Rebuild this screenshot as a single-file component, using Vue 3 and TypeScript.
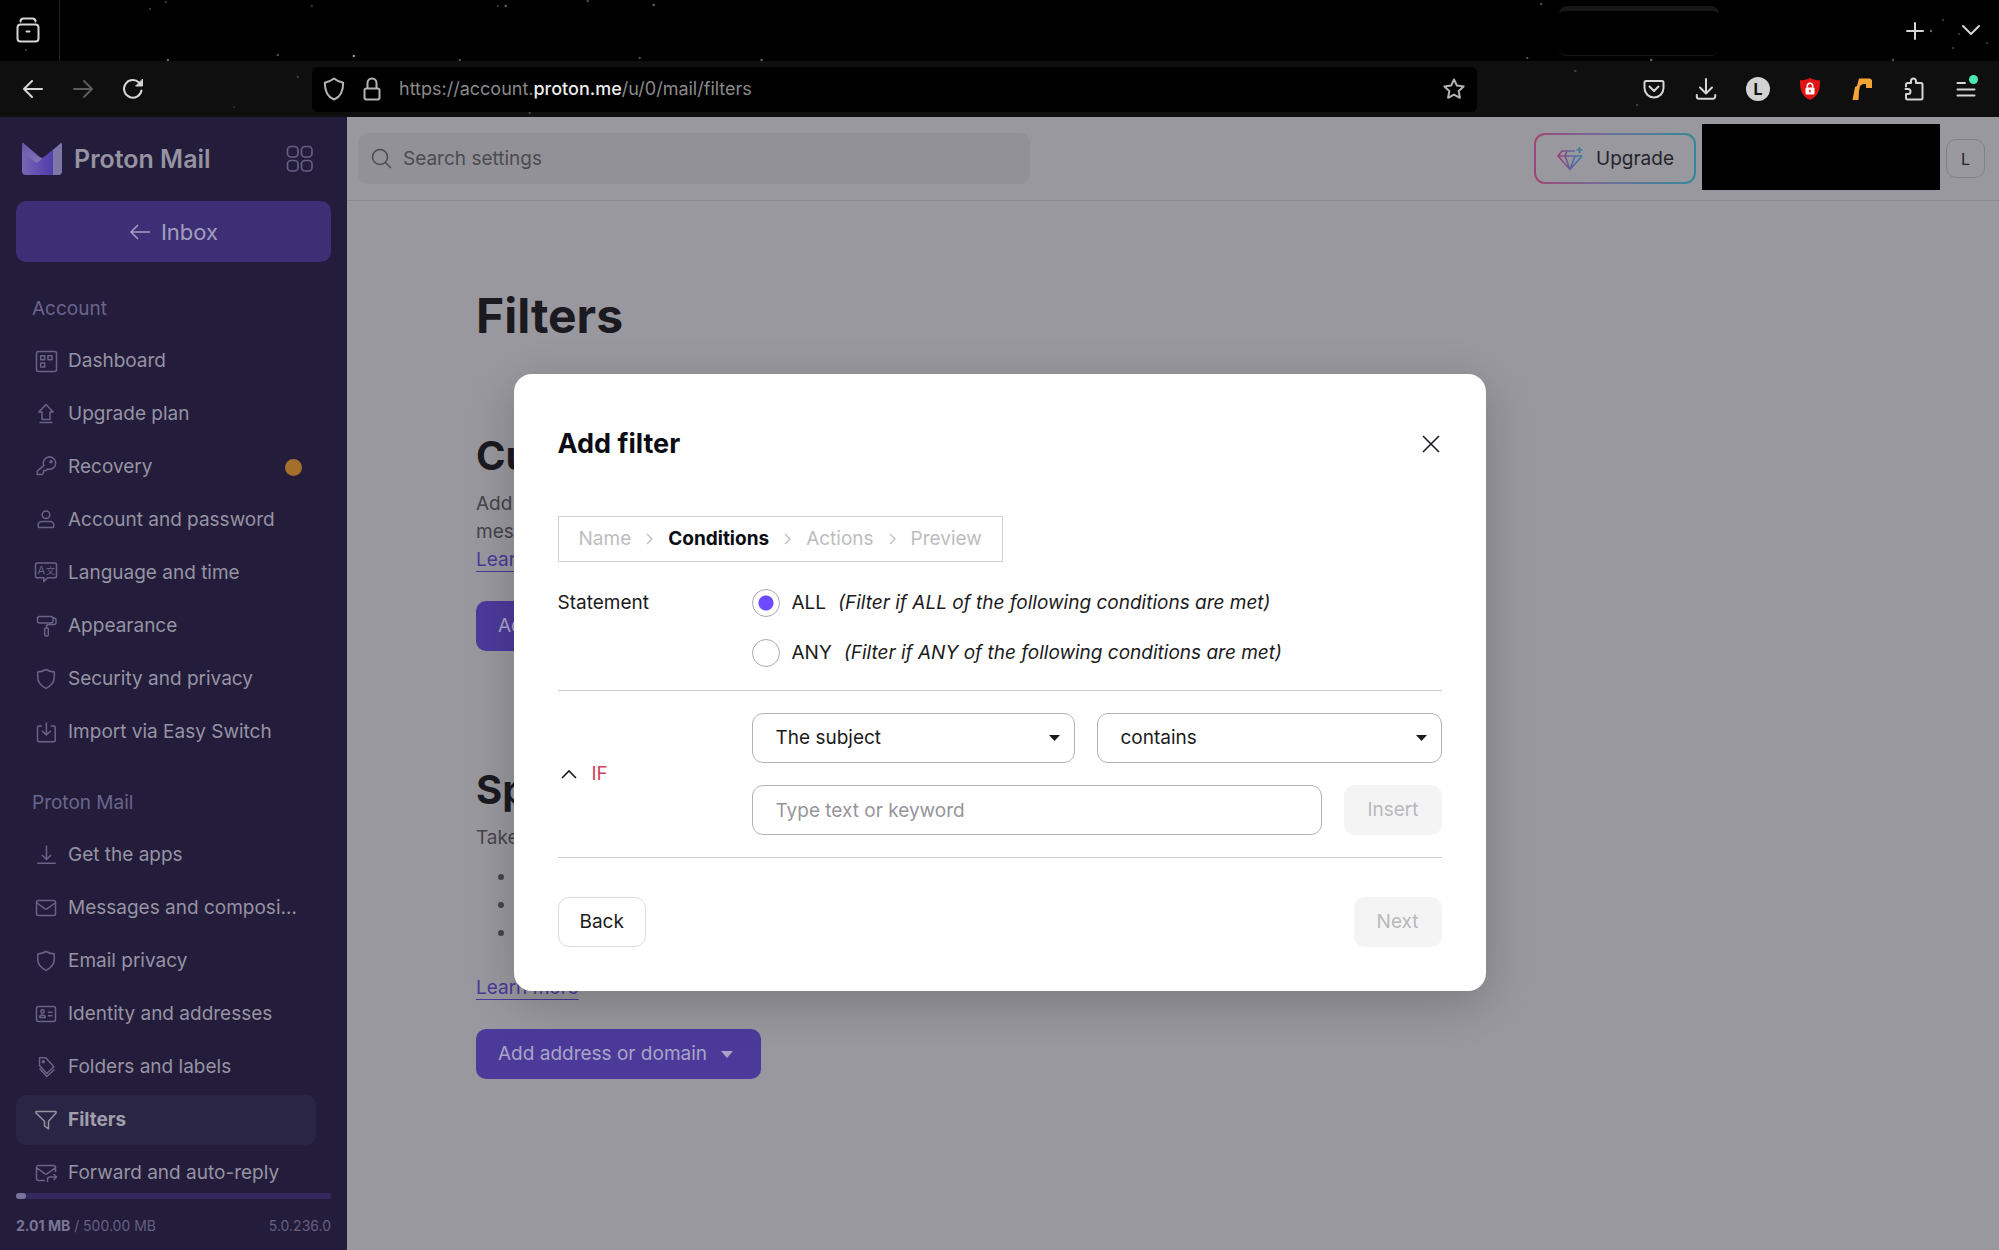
<script setup lang="ts">
import { ref } from 'vue'

interface NavItem {
  label: string
  icon: string
  active?: boolean
  alert?: boolean
}

const shield =
  '<path d="M12 2.5C14.3 4 17 4.7 20.3 5v5c0 5-3 8.7-8.3 11.3C6.7 18.7 3.7 15 3.7 10V5C7 4.7 9.7 4 12 2.5z"/>'

const icons: Record<string, string> = {
  dashboard:
    '<rect x="2.5" y="2.5" width="20" height="20" rx="2"/><rect x="6.7" y="6.7" width="4" height="4"/><rect x="14" y="6.7" width="4" height="4"/><rect x="6.7" y="14" width="4" height="4"/>',
  upgrade: '<path d="M12 2.5L4.8 10H8v7.5h8V10h3.2zM5.5 20.5h13"/>',
  key: '<path d="M9.8 10.6A6.2 6.2 0 1 1 13.6 14l-1.6 1.5H9.5V18L8 19.5H3.3V16z"/><circle cx="17" cy="6.8" r="1"/>',
  user: '<circle cx="12" cy="6.8" r="3.8"/><path d="M7.5 13.5h9a3.3 3.3 0 0 1 3.3 3.3v1.7a1 1 0 0 1-1 1H5.2a1 1 0 0 1-1-1v-1.7a3.3 3.3 0 0 1 3.3-3.3z"/>',
  language:
    '<path d="M3 2h18a1.5 1.5 0 0 1 1.5 1.5v11.7a1.5 1.5 0 0 1-1.5 1.5h-7.5l-3.7 3.7v-3.7H3a1.5 1.5 0 0 1-1.5-1.5V3.5A1.5 1.5 0 0 1 3 2z"/><text x="3.5" y="13" font-size="11">A</text><text x="12" y="13" font-size="9">文</text>',
  roller:
    '<rect x="3.5" y="2.5" width="15.5" height="6.5" rx="2"/><path d="M19 4h1a2 2 0 0 1 2 2v2.5a2 2 0 0 1-2 2h-5.5a2 2 0 0 0-2 2V14"/><rect x="10.7" y="14" width="3.6" height="8" rx="1"/>',
  shield,
  import:
    '<path d="M8 6H5a1.5 1.5 0 0 0-1.5 1.5v12.7a1.5 1.5 0 0 0 1.5 1.5h14.7a1.5 1.5 0 0 0 1.5-1.5V7.5A1.5 1.5 0 0 0 19.700 6h-3M12.4 2.5V15M8 10.7l4.4 4.3 4.4-4.3"/>',
  download: '<path d="M12.5 2.5v14M8 12l4.5 4.5L17 12M3.3 20.3h18.4"/>',
  mail: '<rect x="2.5" y="4.5" width="19" height="15" rx="2"/><path d="M3 7l7.7 5.6a2.3 2.3 0 0 0 2.6 0L21 7"/>',
  card: '<rect x="2.5" y="4.5" width="19" height="15" rx="2"/><circle cx="8.5" cy="9.5" r="1.7"/><path d="M5.7 15.5c0-3.5 5.6-3.5 5.6 0zM14 10.3h4.5M14 13.8h4.5"/>',
  tags: '<path d="M5.5 2.7v7.8l7.3 8 7-6.7-8-9.1zM5.5 13.5l7.3 8 7.7-7"/><circle cx="9.3" cy="6.7" r="1"/>',
  funnel: '<path d="M2 3.5h20V5l-7.5 8.2v7.6l-4-2.8v-4.8L2 5z"/>',
  forward:
    '<path d="M11 19.5H4.5a2 2 0 0 1-2-2v-11a2 2 0 0 1 2-2h15a2 2 0 0 1 2 2V11M3 7l7.7 5.6a2.3 2.3 0 0 0 2.6 0L21 7M13.5 21v-2.5a2.5 2.5 0 0 1 2.5-2.5h6.5M19.500 13l3 3-3 3"/>',
}

const account: NavItem[] = [
  { label: 'Dashboard', icon: 'dashboard' },
  { label: 'Upgrade plan', icon: 'upgrade' },
  { label: 'Recovery', icon: 'key', alert: true },
  { label: 'Account and password', icon: 'user' },
  { label: 'Language and time', icon: 'language' },
  { label: 'Appearance', icon: 'roller' },
  { label: 'Security and privacy', icon: 'shield' },
  { label: 'Import via Easy Switch', icon: 'import' },
]
const mail: NavItem[] = [
  { label: 'Get the apps', icon: 'download' },
  { label: 'Messages and composing', icon: 'mail' },
  { label: 'Email privacy', icon: 'shield' },
  { label: 'Identity and addresses', icon: 'card' },
  { label: 'Folders and labels', icon: 'tags' },
  { label: 'Filters', icon: 'funnel', active: true },
  { label: 'Forward and auto-reply', icon: 'forward' },
]
const sections = [
  { title: 'Account', items: account },
  { title: 'Proton Mail', items: mail },
]

const steps = ['Name', 'Conditions', 'Actions', 'Preview']
const currentStep = 'Conditions'

const statement = ref('ALL')
const statements = ['ALL', 'ANY']
const keyword = ref('')

// Night-sky theme of the browser: [x %, y px, opacity]
const stars: [number, number, number][] = [
  [7.5, 9, 0.2], [8.3, 2, 0.2], [8.4, 60, 0.4], [1.3, 50, 0.2], [13.9, 55, 0.3], [15.6, 6, 0.2],
  [17.7, 56, 0.6], [23, 60, 0.3], [25.3, 6, 0.4], [24.9, 6, 0.2], [29.4, 1, 0.3], [32.7, 5, 0.4],
  [32, 58, 0.3], [38.1, 60, 0.4], [14.9, 77, 0.2], [11.7, 107, 0.1], [26.5, 113, 0.2],
  [77.1, 4, 0.3], [76.4, 58, 0.3], [82.6, 60, 0.4], [78.8, 71, 0.2], [81.9, 105, 0.2],
  [96.6, 31, 0.4], [97.7, 48, 0.2], [99.4, 43, 0.2], [94.7, 60, 0.3], [97.2, 20, 0.2], [98, 34, 0.2],
]
</script>

<template>
  <div class="window">
    <div class="chrome">
      <svg class="stars" aria-hidden="true">
        <circle v-for="(s, i) in stars" :key="i" :cx="s[0] + '%'" :cy="s[1]" r="1.2" fill="#fff" :opacity="s[2]" />
      </svg>
      <div class="tabs">
        <button class="chrome-btn recent" aria-label="Recent browsing">
          <svg width="24" height="36" viewBox="0 0 24 36" class="ln">
            <path d="M4.500 8.500c0-2 1-3 3-3h9c2 0 3 1 3 3M10.500 18.500h3" />
            <rect x="1.5" y="11.5" width="21" height="17" rx="3" />
          </svg>
        </button>
        <div class="ghost-tab"></div>
        <div class="tab-actions">
          <button class="chrome-btn" aria-label="New tab">
            <svg width="20" height="20" viewBox="0 0 20 20" class="ln"><path d="M10 2v16M2 10h16" /></svg>
          </button>
          <button class="chrome-btn" aria-label="List all tabs">
            <svg width="20" height="20" viewBox="0 0 20 20" class="ln"><path d="M2 5l8 8 8-8" /></svg>
          </button>
        </div>
      </div>
      <div class="toolbar">
        <div class="history">
          <button class="chrome-btn" aria-label="Back">
            <svg width="22" height="22" viewBox="0 0 22 22" class="ln"><path d="M20 11H2M10 3l-8 8 8 8" /></svg>
          </button>
          <button class="chrome-btn dim" aria-label="Forward">
            <svg width="22" height="22" viewBox="0 0 22 22" class="ln"><path d="M2 11h18M12 3l8 8-8 8" /></svg>
          </button>
          <button class="chrome-btn" aria-label="Reload">
            <svg width="22" height="22" viewBox="0 0 22 22" class="ln">
              <path d="M19.500 12.500A8.800 8.800 0 1 1 17 4.500" />
              <path d="M20.500 1.500v6.500H14z" fill="currentColor" stroke-width="1" />
            </svg>
          </button>
        </div>
        <div class="url">
          <svg width="22" height="24" viewBox="0 0 22 24" class="ln url-icon">
            <path d="M11 1.500c2.500 2 5.500 3.500 9.200 4.200C20.200 13 17.500 20 11 22.500 4.500 20 1.800 13 1.800 5.700 5.500 5 8.500 3.500 11 1.500z" />
          </svg>
          <svg width="18" height="24" viewBox="0 0 18 24" class="ln url-icon">
            <rect x="1.5" y="11.5" width="15" height="11" rx="2" />
            <path d="M4.500 11V6a4.500 4.500 0 0 1 9 0v5" />
          </svg>
          <span class="address">https://account.<b>proton.me</b>/u/0/mail/filters</span>
          <svg width="24" height="24" viewBox="0 0 24 24" class="ln url-icon">
            <path d="M12 2.500l2.900 6.100 6.700.9-4.900 4.600 1.200 6.700L12 17.600l-5.900 3.200 1.200-6.700L2.400 9.500l6.700-.9z" />
          </svg>
        </div>
        <div class="addons">
          <button class="chrome-btn" aria-label="Save to Pocket">
            <svg width="22" height="22" viewBox="0 0 22 22" class="ln">
              <path d="M3 3h16a1.500 1.500 0 0 1 1.500 1.500V10a9.500 9.500 0 0 1-19 0V4.500A1.500 1.500 0 0 1 3 3zM6.500 8.500L11 13l4.500-4.500" />
            </svg>
          </button>
          <button class="chrome-btn" aria-label="Downloads">
            <svg width="22" height="22" viewBox="0 0 22 22" class="ln">
              <path d="M11 1v14M5 9.500l6 6 6-6M1.800 17v1.500a2.300 2.300 0 0 0 2.300 2.300h13.800a2.300 2.300 0 0 0 2.300-2.300V17" />
            </svg>
          </button>
          <button class="chrome-btn profile" aria-label="Profile">L</button>
          <button class="chrome-btn" aria-label="Password shield">
            <svg width="22" height="24" viewBox="0 0 22 24">
              <path d="M11 1c3 1.700 6.500 2.300 10 2.300C21.300 13 19 19.500 11 23 3 19.500.7 13 1 3.300 4.500 3.300 8 2.700 11 1z" fill="#e01414" />
              <rect x="6.5" y="10.5" width="9" height="7" rx="1" fill="#fff" />
              <path d="M8.300 10.500V9a2.700 2.700 0 0 1 5.400 0v1.500" fill="none" stroke="#fff" stroke-width="1.6" />
              <rect x="10.3" y="12.7" width="1.4" height="2.6" fill="#e01414" />
            </svg>
          </button>
          <button class="chrome-btn" aria-label="Extension">
            <svg width="22" height="24" viewBox="0 0 22 24">
              <path d="M8 1.500h11L21 3v8h-6V7h-3L9 9l-1 5-.5 9H1.500L4 10l2-1z" fill="#f2a532" />
            </svg>
          </button>
          <button class="chrome-btn" aria-label="Extensions">
            <svg width="22" height="24" viewBox="0 0 22 24" class="ln">
              <path d="M3 9.500V7.500A1.500 1.500 0 0 1 4.500 6H8V4a2.500 2.500 0 0 1 5 0v2h5a1.500 1.500 0 0 1 1.500 1.500V21a1.500 1.500 0 0 1-1.500 1.500H4.500A1.500 1.500 0 0 1 3 21v-4h2a2.500 2.500 0 0 0 0-5H2.500" />
            </svg>
          </button>
          <button class="chrome-btn menu" aria-label="Application menu">
            <svg width="22" height="24" viewBox="0 0 22 24" class="ln"><path d="M2.500 6H10M2.500 12.500h17M2.500 18.500h17" /></svg>
            <span class="update-dot"></span>
          </button>
        </div>
      </div>
    </div>

    <div class="page">
      <aside class="sidebar">
        <div class="brand">
          <svg width="40" height="32" viewBox="0 0 40 32" aria-hidden="true">
            <defs>
              <linearGradient id="flap" x1="0" y1="0" x2="1" y2="1">
                <stop offset="0" stop-color="#6555ae" /><stop offset="1" stop-color="#857cb0" />
              </linearGradient>
              <linearGradient id="body" x1="0" y1="0" x2="1" y2="0">
                <stop offset="0" stop-color="#7668b4" /><stop offset="0.6" stop-color="#5744ad" /><stop offset="1" stop-color="#4d38a6" />
              </linearGradient>
            </defs>
            <path d="M0 1.500C0 .2.9 0 1.800.7L20 15.500 38.200.7C39.100 0 40 .2 40 1.500V28a4 4 0 0 1-4 4H4a4 4 0 0 1-4-4z" fill="url(#body)" />
            <path d="M31 7l7.200-6.300C39.100 0 40 .2 40 1.500V28a4 4 0 0 1-4 4h-5z" fill="#7f76a8" />
            <path d="M0 1.500C0 .2.9 0 1.800.7L16 13.500c2 1.800 4 1.800 6 .2l-5.500 5c-1.500 1.300-2.800 1.200-4.300-.2L0 8z" fill="url(#flap)" />
          </svg>
          <span class="wordmark">Proton Mail</span>
          <button class="plain apps" aria-label="Proton apps">
            <svg width="28" height="28" viewBox="0 0 28 28" fill="none" stroke="currentColor" stroke-width="1.7">
              <rect x="1.5" y="1.5" width="10.5" height="10.5" rx="3.5" /><rect x="15.5" y="1.5" width="10.5" height="10.5" rx="3.5" />
              <rect x="1.5" y="15.5" width="10.5" height="10.5" rx="3.5" /><rect x="15.5" y="15.5" width="10.5" height="10.5" rx="3.5" />
            </svg>
          </button>
        </div>
        <a href="#inbox" class="inbox">
          <svg width="22" height="22" viewBox="0 0 22 22" fill="none" stroke="currentColor" stroke-width="1.5"><path d="M21 11H2M9 4l-7 7 7 7" /></svg>
          Inbox
        </a>
        <nav class="nav">
          <section v-for="section in sections" :key="section.title">
            <h2 class="nav-title">{{ section.title }}</h2>
            <a v-for="item in section.items" :key="item.label" href="#" class="nav-item" :class="{ active: item.active }">
              <svg class="nav-icon" width="24" height="24" viewBox="0 0 24 24" aria-hidden="true" v-html="icons[item.icon]"></svg>
              <span class="nav-label">{{ item.label }}</span>
              <span v-if="item.alert" class="alert-dot"></span>
            </a>
          </section>
        </nav>
        <div class="storage">
          <div class="meter"><span class="meter-fill"></span></div>
          <div class="storage-text">
            <span><b>2.01 MB</b> / 500.00 MB</span>
            <span>5.0.236.0</span>
          </div>
        </div>
      </aside>

      <div class="content">
        <header class="topbar">
          <label class="search">
            <svg width="22" height="22" viewBox="0 0 22 22" fill="none" stroke="currentColor" stroke-width="1.5"><circle cx="9" cy="9" r="7.5" /><path d="M14.500 14.500L20 20" /></svg>
            <input type="search" placeholder="Search settings" aria-label="Search settings" />
          </label>
          <button class="upgrade">
            <svg width="28" height="26" viewBox="0 0 28 26" fill="none" stroke="url(#gem)" stroke-width="1.7" stroke-linejoin="round">
              <defs>
                <linearGradient id="gem" gradientUnits="userSpaceOnUse" x1="1" y1="0" x2="27" y2="0">
                  <stop offset="0" stop-color="#a03c70" /><stop offset="0.6" stop-color="#5c68a0" /><stop offset="1" stop-color="#2f82a0" />
                </linearGradient>
              </defs>
              <path d="M19 5H6L2 10l12 13.500L26 10M2 10h24M9 10l5 13.500L19 10M9 10l2-5M23.500 1v6M20.500 4h6" />
            </svg>
            Upgrade
          </button>
          <div class="account-name"></div>
          <button class="avatar" aria-label="Account menu">L</button>
        </header>
        <main class="settings">
          <h1>Filters</h1>
          <section class="block">
            <h2>Custom filters</h2>
            <p>Add a custom filter to perform actions such as automatically labeling or archiving messages.<br /><a href="#">Learn more</a></p>
            <button class="solid">Add filter</button>
          </section>
          <section class="block">
            <h2>Spam, block, and allow lists</h2>
            <p>Take control over what lands in your inbox by creating the following lists:</p>
            <ul>
              <li>Spam: To prevent junk mail from clogging up your inbox</li>
              <li>Block: To stop phishing or suspicious emails from entering your email system</li>
              <li>Allow: To ensure critical messages don't end up in spam and getting missed</li>
            </ul>
            <p><a href="#">Learn more</a></p>
            <button class="solid">
              Add address or domain
              <svg width="12" height="7" viewBox="0 0 12 7"><path d="M0 0h12L6 7z" fill="currentColor" /></svg>
            </button>
          </section>
        </main>
      </div>

      <div class="overlay">
        <form class="modal" role="dialog" aria-labelledby="modal-title" @submit.prevent>
          <div class="modal-head">
            <h2 id="modal-title">Add filter</h2>
            <button type="button" class="plain close" aria-label="Close">
              <svg width="18" height="18" viewBox="0 0 18 18" fill="none" stroke="currentColor" stroke-width="1.6"><path d="M1 1l16 16M17 1L1 17" /></svg>
            </button>
          </div>
          <ol class="steps">
            <template v-for="(step, i) in steps" :key="step">
              <li v-if="i > 0" class="sep" aria-hidden="true">
                <svg width="7" height="12" viewBox="0 0 7 12" fill="none" stroke="currentColor" stroke-width="1.3"><path d="M1 1l5 5-5 5" /></svg>
              </li>
              <li :class="{ current: step === currentStep }">{{ step }}</li>
            </template>
          </ol>
          <div class="row" role="radiogroup" aria-labelledby="statement-label">
            <span id="statement-label" class="row-label">Statement</span>
            <div>
              <label v-for="s in statements" :key="s" class="radio">
                <input v-model="statement" type="radio" name="statement" :value="s" />
                <span>{{ s }}</span>
                <em>(Filter if {{ s }} of the following conditions are met)</em>
              </label>
            </div>
          </div>
          <div class="row condition">
            <button type="button" class="plain toggle">
              <svg width="16" height="10" viewBox="0 0 16 10" fill="none" stroke="currentColor" stroke-width="1.6"><path d="M1 9l7-7 7 7" /></svg>
              <span>IF</span>
            </button>
            <div class="fields">
              <div class="line">
                <div class="select subject">
                  <select aria-label="Condition type"><option>The subject</option><option>The sender</option><option>The recipient</option></select>
                  <svg width="11" height="6" viewBox="0 0 11 6"><path d="M0 0h11L5.500 6z" fill="currentColor" /></svg>
                </div>
                <div class="select">
                  <select aria-label="Comparator"><option>contains</option><option>is exactly</option><option>begins with</option></select>
                  <svg width="11" height="6" viewBox="0 0 11 6"><path d="M0 0h11L5.500 6z" fill="currentColor" /></svg>
                </div>
              </div>
              <div class="line">
                <input v-model="keyword" class="keyword" type="text" placeholder="Type text or keyword" aria-label="Text or keyword" />
                <button type="button" class="btn" disabled>Insert</button>
              </div>
            </div>
          </div>
          <div class="modal-foot">
            <button type="button" class="btn outline">Back</button>
            <button type="submit" class="btn" disabled>Next</button>
          </div>
        </form>
      </div>
    </div>
  </div>
</template>

<style>
body {
  margin: 0;
  background: #99989e;
}
</style>

<style scoped>
* {
  box-sizing: border-box;
}
.window {
  display: flex;
  flex-direction: column;
  height: 100vh;
  min-width: 1200px;
  overflow: hidden;
  font: 400 19px/28px Inter, "Noto Sans CJK SC", sans-serif;
}
button,
input,
select {
  font: inherit;
  color: inherit;
  margin: 0;
}
h1,
h2,
p,
ul,
ol {
  margin: 0;
  padding: 0;
}

/* Browser chrome */
.chrome {
  position: relative;
  flex: none;
  background: #000;
  color: #d6d6d6;
}
.stars {
  position: absolute;
  inset: 0;
  z-index: 1;
  width: 100%;
  height: 100%;
  pointer-events: none;
}
.ln {
  fill: none;
  stroke: currentColor;
  stroke-width: 2;
  stroke-linecap: round;
  stroke-linejoin: round;
}
.chrome-btn {
  display: flex;
  align-items: center;
  justify-content: center;
  width: 24px;
  height: 36px;
  padding: 0;
  border: 0;
  background: none;
}
.tabs {
  display: flex;
  align-items: center;
  height: 61px;
}
.recent {
  width: 60px;
  height: 61px;
  padding-right: 4px;
  border-right: 1px solid #222;
}
.ghost-tab {
  width: 160px;
  height: 50px;
  margin-left: auto;
  border-radius: 8px;
  border-top: 5px solid #171717;
  border-bottom: 1px solid #171717;
}
.tab-actions {
  display: flex;
  gap: 32px;
  padding: 0 16px 0 184px;
}
.toolbar {
  display: flex;
  align-items: center;
  height: 56px;
  padding: 0 21px;
  background: #0f0f0f;
}
.history {
  display: flex;
  gap: 26px;
  width: 291px;
}
.dim {
  color: #5c5c5c;
}
.url {
  display: flex;
  align-items: center;
  gap: 18px;
  flex: 1;
  height: 45px;
  padding: 0 11px;
  border-radius: 6px;
  background: #000;
}
.url-icon {
  color: #b4b4b4;
}
.address {
  flex: 1;
  color: #8a8a8a;
  font-size: 18px;
}
.address b {
  font-weight: 500;
  color: #ececec;
}
.addons {
  display: flex;
  justify-content: space-between;
  width: 336px;
  margin-left: 165px;
}
.profile {
  align-self: center;
  height: 24px;
  border-radius: 50%;
  background: #d2d2d2;
  color: #111;
  font-size: 16px;
  font-weight: 700;
}
.menu {
  position: relative;
}
.update-dot {
  position: absolute;
  top: 4px;
  right: 0;
  width: 9px;
  height: 9px;
  border-radius: 50%;
  background: #4be8b4;
}

/* Layout */
.page {
  position: relative;
  display: flex;
  flex: 1;
  min-height: 0;
}
.plain {
  display: flex;
  align-items: center;
  padding: 0;
  border: 0;
  background: none;
}

/* Sidebar */
.sidebar {
  display: flex;
  flex-direction: column;
  flex: none;
  width: 347px;
  padding: 0 16px;
  background: #231d3b;
  color: #9693a3;
}
.brand {
  display: flex;
  align-items: center;
  height: 84px;
  padding: 0 17px 0 6px;
}
.wordmark {
  margin-left: 12px;
  font-size: 25px;
  font-weight: 600;
}
.apps {
  margin-left: auto;
  color: #655e85;
}
.inbox {
  display: flex;
  align-items: center;
  justify-content: center;
  gap: 10px;
  height: 61px;
  flex: none;
  border-radius: 10px;
  background: #3c2f76;
  color: #a29ebb;
  font-size: 22px;
  text-decoration: none;
}
.nav {
  flex: 1;
  min-height: 0;
  width: 300px;
  padding-top: 22px;
  overflow: hidden;
}
.nav-title {
  height: 50px;
  margin-bottom: 2px;
  padding-left: 16px;
  font-size: 19px;
  font-weight: 400;
  line-height: 50px;
  color: #6b658c;
}
.nav-item {
  display: flex;
  align-items: center;
  height: 50px;
  margin-bottom: 3px;
  padding: 0 14px 0 18px;
  border-radius: 10px;
  color: inherit;
  text-decoration: none;
}
.nav section + section {
  margin-top: 21px;
}
.nav-icon {
  flex: none;
  fill: none;
  stroke: #6a6389;
  stroke-width: 1.5px;
  stroke-linejoin: round;
}
.nav-icon :deep(text) {
  fill: #6a6389;
  stroke: none;
}
.nav-label {
  margin-left: 10px;
  overflow: hidden;
  text-overflow: ellipsis;
  white-space: nowrap;
}
.alert-dot {
  width: 17px;
  height: 17px;
  margin: 0 0 0 auto;
  border-radius: 50%;
  background: #a3702c;
}
.active {
  background: #2b2545;
  font-weight: 700;
  color: #a19eab;
}
.active .nav-icon {
  stroke: #9793a3;
}
.storage {
  flex: none;
  padding-bottom: 13px;
}
.meter {
  height: 6px;
  border-radius: 3px;
  background: #34295f;
}
.meter-fill {
  display: block;
  width: 10px;
  height: 6px;
  border-radius: 3px;
  background: #7a7399;
}
.storage-text {
  display: flex;
  justify-content: space-between;
  margin-top: 16px;
  font-size: 14px;
  line-height: 22px;
  color: #655f80;
}
.storage-text b {
  font-weight: 700;
  color: #7b7595;
}

/* Main */
.content {
  flex: 1;
  min-width: 0;
  background: #99989e;
}
.topbar {
  display: flex;
  align-items: center;
  height: 84px;
  padding: 0 14px 0 11px;
  border-bottom: 1px solid #8c8b91;
}
.search {
  display: flex;
  align-items: center;
  gap: 10px;
  flex: 0 1 672px;
  height: 51px;
  margin-right: auto;
  padding: 0 13px;
  border-radius: 10px;
  background: #929197;
  color: #4c4b52;
}
.search input {
  flex: 1;
  min-width: 0;
  padding: 0;
  border: 0;
  outline: 0;
  background: none;
}
.search input::placeholder {
  color: #4c4b52;
  opacity: 1;
}
.upgrade {
  display: flex;
  align-items: center;
  gap: 12px;
  height: 51px;
  padding: 0 20px;
  border: 2px solid transparent;
  border-radius: 11px;
  background: linear-gradient(#99989e, #99989e) padding-box,
    linear-gradient(90deg, #9e4676, #6a749c 50%, #35889c) border-box;
  color: #25242b;
}
.account-name {
  width: 238px;
  height: 66px;
  margin: 0 6px 4px;
  background: #000;
}
.avatar {
  width: 39px;
  height: 39px;
  padding: 0;
  border: 1px solid #808085;
  border-radius: 10px;
  background: none;
  color: #25242b;
  font-size: 16px;
}
.settings {
  padding: 83px 129px 0;
  color: #1b1a20;
}
h1 {
  font-size: 48px;
  line-height: 64px;
  font-weight: 700;
}
.block {
  width: 780px;
}
.block h2 {
  margin-bottom: 9px;
  font-size: 40px;
  line-height: 50px;
  font-weight: 700;
}
h1 + .block {
  margin-top: 83px;
}
.block + .block {
  margin-top: 114px;
}
.block p,
.block li {
  color: #45444b;
}
.block a {
  color: #49389a;
  text-underline-offset: 5px;
  text-decoration-thickness: 1px;
}
.block ul {
  margin: 11px 0 27px;
  padding-left: 41px;
}
.solid {
  display: flex;
  align-items: center;
  gap: 14px;
  height: 50px;
  margin-top: 27px;
  padding: 0 28px 0 22px;
  border: 0;
  border-radius: 10px;
  background: #4c3a9b;
  color: #a9a4c4;
}

/* Modal */
.overlay {
  position: absolute;
  inset: 0;
  display: grid;
  place-items: center;
  padding-bottom: 2px;
}
.modal {
  width: 972px;
  padding: 44px;
  border-radius: 18px;
  background: #fff;
  box-shadow: 0 12px 48px rgba(0, 0, 0, 0.2);
  color: #1b1a20;
}
.modal-head {
  display: flex;
  align-items: center;
  justify-content: space-between;
  height: 52px;
}
.modal-head h2 {
  font-size: 27px;
  font-weight: 700;
  color: #0c0c14;
}
.close {
  width: 20px;
  height: 36px;
}
.steps {
  display: inline-flex;
  align-items: center;
  gap: 15px;
  height: 46px;
  margin: 46px 0 16px;
  padding: 0 20px;
  border: 1px solid #d3d3d6;
  list-style: none;
  vertical-align: top;
  color: #bdbdc0;
}
.sep {
  display: flex;
}
.current {
  font-weight: 700;
  color: #0c0c14;
}
.row {
  display: grid;
  grid-template-columns: 194px 1fr;
}
.row-label {
  line-height: 50px;
}
.radio {
  display: flex;
  align-items: center;
  height: 50px;
}
.radio input {
  appearance: none;
  width: 28px;
  height: 28px;
  margin-right: 12px;
  border: 1px solid #aaa9ae;
  border-radius: 50%;
  background: #fff;
}
.radio input:checked {
  background: radial-gradient(circle, #6d4aff 7px, #fff 8px);
}
.radio em {
  margin-left: 12px;
}
.condition {
  margin-top: 12px;
  padding: 22px 0;
  border: solid #d0d0d3;
  border-width: 1px 0;
}
.toggle {
  gap: 15px;
  padding-left: 3px;
}
.toggle span {
  color: #d0405f;
}
.fields {
  display: grid;
  gap: 22px;
}
.line {
  display: flex;
  gap: 22px;
}
.select {
  position: relative;
  flex: 1;
}
.subject {
  flex: 0 0 323px;
}
.select select {
  appearance: none;
  width: 100%;
  height: 50px;
  padding: 0 40px 0 23px;
  border: 1px solid #b3b2b7;
  border-radius: 11px;
  background: #fff;
}
.select svg {
  position: absolute;
  right: 15px;
  top: 22px;
  pointer-events: none;
}
.keyword {
  flex: 1;
  min-width: 0;
  height: 50px;
  padding: 0 23px;
  border: 1px solid #b3b2b7;
  border-radius: 11px;
  background: #fff;
}
.keyword::placeholder {
  color: #96959a;
  opacity: 1;
}
.btn {
  height: 50px;
  padding: 0 23px;
  border: 0;
  border-radius: 11px;
  background: #f5f4f5;
}
.btn:disabled {
  color: #b9b8bb;
}
.btn.outline {
  padding: 0 21px;
  border: 1px solid #dddce1;
  background: #fff;
}
.modal-foot {
  display: flex;
  justify-content: space-between;
  margin-top: 39px;
}
</style>
